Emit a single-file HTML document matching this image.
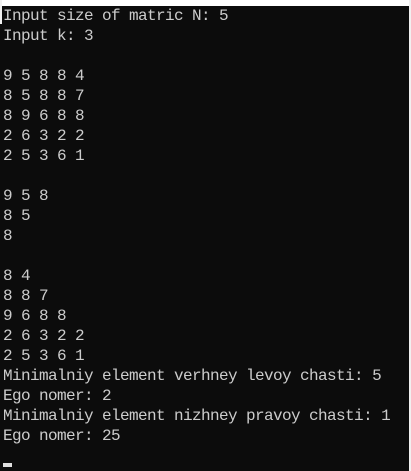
<!DOCTYPE html>
<html><head><style>
html,body{margin:0;padding:0;}
body{width:411px;height:471px;background:#0c0c0c;position:relative;overflow:hidden;}
.top{position:absolute;left:0;top:0;width:411px;height:6px;background:#fff;}
.left{position:absolute;left:0;top:0;width:2px;height:24px;background:#f0f0f0;}
.right{position:absolute;right:0;top:0;width:2px;height:471px;background:#f0f0f0;}
pre{position:absolute;left:3px;top:6px;margin:0;font-family:"Liberation Mono",monospace;font-size:16px;letter-spacing:-0.6px;line-height:20px;color:#cccccc;}
.cur{position:absolute;left:3px;top:463px;width:9px;height:4px;background:#e0e0e0;}
</style></head><body>
<div class="top"></div><div class="left"></div><div class="right"></div>
<pre>Input size of matric N: 5
Input k: 3

9 5 8 8 4
8 5 8 8 7
8 9 6 8 8
2 6 3 2 2
2 5 3 6 1

9 5 8
8 5
8

8 4
8 8 7
9 6 8 8
2 6 3 2 2
2 5 3 6 1
Minimalniy element verhney levoy chasti: 5
Ego nomer: 2
Minimalniy element nizhney pravoy chasti: 1
Ego nomer: 25</pre>
<div class="cur"></div>
</body></html>
